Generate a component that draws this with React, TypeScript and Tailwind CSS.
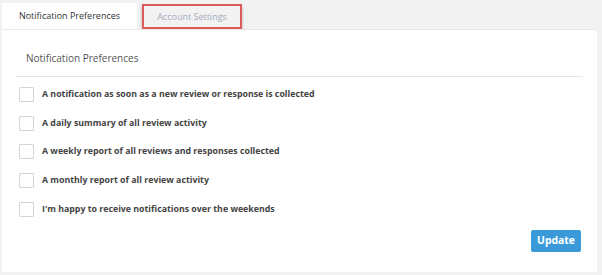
import React from 'react';

const OPTIONS = [
  'A notification as soon as a new review or response is collected',
  'A daily summary of all review activity',
  'A weekly report of all reviews and responses collected',
  'A monthly report of all review activity',
  "I'm happy to receive notifications over the weekends",
];

const App: React.FC = () => {
  return (
    <div className="w-[602px] h-[275px] bg-[#f2f2f2] pl-[2px] pr-[5px] pt-[3px] pb-[3px] flex flex-col" style={{ fontFamily: '"Open Sans", sans-serif' }}>
      {/* tabs */}
      <div className="flex items-end h-[26px]">
        <div className="h-[26px] w-[135px] bg-white flex items-center justify-center text-[9px] font-medium text-[#333]">
          Notification Preferences
        </div>
        <div className="ml-[5px] h-[25px] w-[100px] border-2 border-[#e05a5a] shadow-[0_2px_3px_rgba(0,0,0,0.25)] flex items-center justify-center text-[9px] font-medium text-[#a3acbd] self-start mt-[1px]">
          Account Settings
        </div>
      </div>

      {/* panel */}
      <div className="flex-1 bg-white border-t border-[#e6e8ee] px-[14px] flex flex-col">
        <div className="pl-[10px] pt-[21px] pb-[10px] text-[10px] font-medium text-[#555] border-b border-[#e4e4e4]">
          Notification Preferences
        </div>

        <div className="flex flex-col pt-[10px] gap-[13.7px]">
          {OPTIONS.map(label => (
            <label key={label} className="flex items-center gap-[8px] pl-[3px]">
              <span className="w-[15px] h-[15px] border border-[#d4d4d4] bg-white rounded-[1px] shrink-0" />
              <span className="text-[8.8px] leading-[15px] font-bold text-[#444]">{label}</span>
            </label>
          ))}
        </div>

        <div className="flex justify-end mt-auto pb-[20px] pr-[2px]">
          <button className="bg-[#3a9ad9] text-white text-[10.4px] font-bold rounded-[2px] w-[50px] h-[22px]">
            Update
          </button>
        </div>
      </div>
    </div>
  );
};

export default App;
